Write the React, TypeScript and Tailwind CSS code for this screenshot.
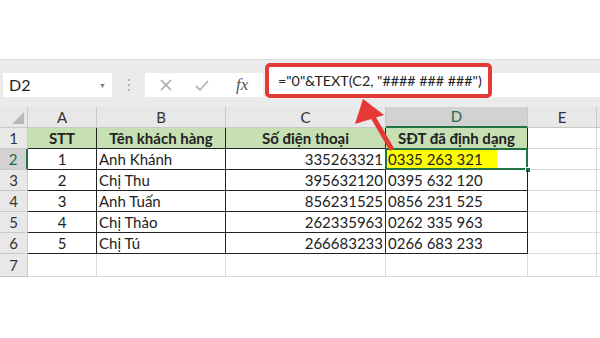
import React from "react";

const cols = [28, 69, 129, 160, 142, 69];
const letters = ["A", "B", "C", "D", "E"];
const rows = [
  ["1", "Anh Khánh", "335263321", "0335 263 321"],
  ["2", "Chị Thu", "395632120", "0395 632 120"],
  ["3", "Anh Tuấn", "856231525", "0856 231 525"],
  ["4", "Chị Thảo", "262335963", "0262 335 963"],
  ["5", "Chị Tú", "266683233", "0266 683 233"],
];

export default function App() {
  const font = { fontFamily: "Lato, 'Noto Sans', sans-serif" };
  return (
    <div className="relative w-[600px] h-[338px] bg-white overflow-hidden" style={font}>
      <div className="h-[59px] bg-white" />
      {/* toolbar */}
      <div className="h-[48px] bg-[#ebebeb] border-t border-[#dcdcdc] flex items-start pt-[13px]">
        <div className="ml-[3px] w-[109px] h-[24px] bg-white flex items-center justify-between px-[6px]">
          <span className="text-[16px] text-[#222]">D2</span>
          <span className="text-[7px] text-[#777]">▼</span>
        </div>
        <div className="w-[33px] h-[24px] flex items-center justify-center">
          <div className="flex flex-col gap-[3px]">
            <div className="w-[2px] h-[2px] bg-[#b5b5b5]" />
            <div className="w-[2px] h-[2px] bg-[#b5b5b5]" />
            <div className="w-[2px] h-[2px] bg-[#b5b5b5]" />
          </div>
        </div>
        <div className="w-[118px] h-[24px] bg-white flex items-center">
          <svg width="14" height="14" viewBox="0 0 14 14" className="ml-[14px]">
            <path d="M2 2 L12 12 M12 2 L2 12" stroke="#a8a8a8" strokeWidth="1.6" />
          </svg>
          <svg width="16" height="14" viewBox="0 0 16 14" className="ml-[21px]">
            <path d="M2 8 L6 12 L14 3" stroke="#b5b5b5" strokeWidth="1.8" fill="none" />
          </svg>
          <span className="ml-[26px] text-[17px] italic text-[#555]" style={{ fontFamily: "'Liberation Serif', serif" }}>
            fx
          </span>
        </div>
        <div className="ml-[3px] flex-1 h-[24px] bg-white" />
      </div>
      {/* red formula box */}
      <div className="absolute left-[265px] top-[63px] w-[227px] h-[35px] rounded-[5px] border-[4px] border-[#e53935] bg-white flex items-center pl-[9px]">
        <span className="text-[14.3px] text-[#222] whitespace-nowrap">
          ="0"&amp;TEXT(C2, "#### ### ###")
        </span>
      </div>
      {/* sheet */}
      <div
        className="grid text-[#222]"
        style={{ gridTemplateColumns: cols.map((c) => c + "px").join(" ") + " 1fr" }}
      >
        {/* header row */}
        <div className="h-[21px] bg-[#e8e8e8] border-r border-b border-[#c8c8c8] relative">
          <div className="absolute right-[3px] bottom-[3px] w-0 h-0 border-l-[12px] border-l-transparent border-b-[12px] border-b-[#b8b8b8]" />
        </div>
        {letters.map((l) => (
          <div
            key={l}
            className={
              "h-[21px] flex items-center justify-center text-[15px] border-r border-[#c8c8c8] " +
              (l === "D"
                ? "bg-[#d2d2d2] text-[#1e6b3f] border-b-2 border-b-[#217346]"
                : "bg-[#e8e8e8] text-[#333] border-b border-b-[#c8c8c8]")
            }
          >
            {l}
          </div>
        ))}
        <div className="h-[21px] bg-[#e8e8e8] border-b border-[#c8c8c8]" />

        {/* row 1 */}
        <div className="h-[21px] bg-[#e8e8e8] border-r border-b border-[#c8c8c8] flex items-center justify-center text-[15px] text-[#333]">
          1
        </div>
        {["STT", "Tên khách hàng", "Số điện thoại", "SĐT đã định dạng"].map((t) => (
          <div
            key={t}
            className="h-[21px] bg-[#c6e0b4] border-r border-b border-[#222] flex items-center justify-center text-[15px] font-bold"
          >
            {t}
          </div>
        ))}
        <div className="h-[21px] border-r border-b border-[#dadada]" />
        <div className="h-[21px] border-b border-[#dadada]" />

        {rows.map((r, i) => {
          const sel = i === 0;
          return (
            <React.Fragment key={i}>
              <div
                className={
                  "h-[21px] border-r border-b border-[#c8c8c8] flex items-center justify-center text-[15px] " +
                  (sel ? "bg-[#d2d2d2] text-[#1e6b3f] border-r-2 border-r-[#217346]" : "bg-[#e8e8e8] text-[#333]")
                }
              >
                {i + 2}
              </div>
              <div className="h-[21px] border-r border-b border-[#222] flex items-center justify-center text-[15px]">
                {r[0]}
              </div>
              <div className="h-[21px] border-r border-b border-[#222] flex items-center pl-[2px] text-[15px]">
                {r[1]}
              </div>
              <div className="h-[21px] border-r border-b border-[#222] flex items-center justify-end pr-[2px] text-[15px]">
                {r[2]}
              </div>
              <div className="h-[21px] border-r border-b border-[#222] flex items-center text-[15px] relative">
                {sel ? (
                  <>
                    <span className="bg-[#ffff00] h-full flex items-center pl-[2px] pr-[14px]">{r[3]}</span>
                    <div className="absolute -left-[1px] -top-[1px] -right-[1px] -bottom-[1px] border-2 border-[#217346]" />
                    <div className="absolute -right-[4px] -bottom-[4px] w-[6px] h-[6px] bg-[#217346] border border-white" />
                  </>
                ) : (
                  <span className="pl-[2px]">{r[3]}</span>
                )}
              </div>
              <div className="h-[21px] border-r border-b border-[#dadada]" />
              <div className="h-[21px] border-b border-[#dadada]" />
            </React.Fragment>
          );
        })}
        {/* row 7 */}
        <div className="h-[23px] bg-[#e8e8e8] border-r border-b border-[#c8c8c8] flex items-center justify-center text-[15px] text-[#333]">
          7
        </div>
        {[0, 1, 2, 3, 4].map((k) => (
          <div key={k} className="h-[23px] border-r border-b border-[#dadada]" />
        ))}
        <div className="h-[23px] border-b border-[#dadada]" />
      </div>
      {/* arrow */}
      <svg className="absolute left-0 top-0 pointer-events-none" width="600" height="338">
        <line x1="391" y1="148" x2="370" y2="112" stroke="#e53935" strokeWidth="5" strokeLinecap="round" />
        <polygon points="363,99 355,124 384,115" fill="#e53935" />
      </svg>
    </div>
  );
}
